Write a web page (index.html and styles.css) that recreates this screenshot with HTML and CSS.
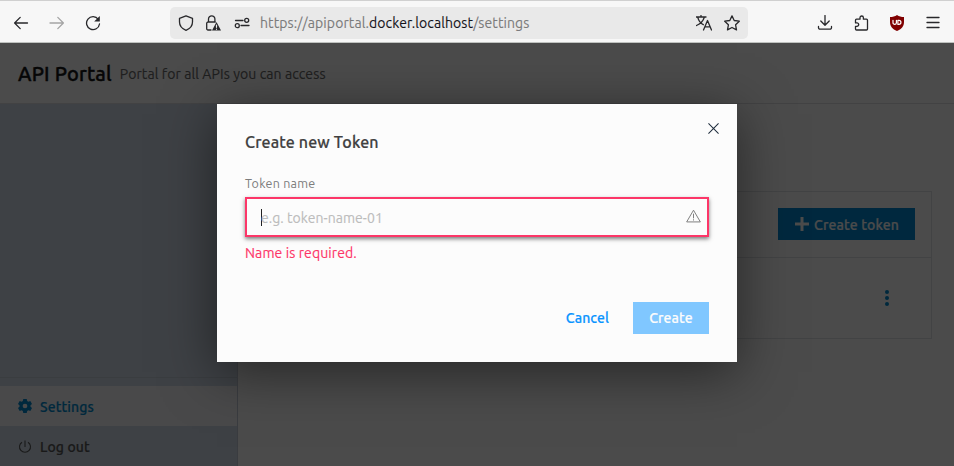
FILE: index.html
```
<!DOCTYPE html>
<html lang="en">
<head>
<meta charset="utf-8">
<title>API Portal</title>
<link rel="stylesheet" href="styles.css">
</head>
<body>
<div class="browser">
  <svg class="icon back" viewBox="0 0 16 16"><path d="M14.500 8H1.600M7.200 2.400 1.600 8l5.600 5.600"/></svg>
  <svg class="icon forward" viewBox="0 0 16 16"><path d="M1 8h13.400M8.800 2.400 14.400 8l-5.600 5.600"/></svg>
  <svg class="icon reload" viewBox="0 0 16 16"><path d="M13.300 4.300A6.500 6.500 0 1 0 14.500 9"/><path class="solid" d="M14.800 1v5.600H9.200z"/></svg>
  <div class="address">
    <svg class="icon shield" viewBox="0 0 16 16"><path d="M8 .8 14.500 3.300V7c0 3.600-2.300 6.600-6.500 8.300C3.800 13.600 1.500 10.600 1.500 7V3.300z"/></svg>
    <svg class="icon lock" viewBox="0 0 16 16"><path d="M6 15H3a1.300 1.300 0 0 1-1.300-1.300V8.300A1.300 1.300 0 0 1 3 7h7.300M3.500 7V4a3.200 3.200 0 0 1 6.400 0v3"/><path class="solid" d="M11.500 7 16 15.500H7z"/><path class="mark" d="M11.500 10v2.300M11.500 14v.3"/></svg>
    <svg class="icon sliders" viewBox="0 0 16 16"><path d="M1.500 5.500h7.500M7 10.500h8"/><circle cx="12.700" cy="5.300" r="2"/><circle cx="3.300" cy="10.700" r="2"/></svg>
    <span class="url">https://apiportal.<b>docker.localhost</b>/settings</span>
    <svg class="icon translate" viewBox="0 0 16 16"><path d="M0 2h10M5 .5V2M1.800 2.500c1 3.500 3 6 5.500 7.200M8.200 2.500C7.200 6 4.500 8.800.5 10.500M7.500 15l4-9.500 4 9.500M9 11.800h5"/></svg>
    <svg class="icon star" viewBox="0 0 16 16"><path d="m8 .9 2.200 4.600 5.100.7-3.700 3.600.9 5.100L8 12.500l-4.500 2.400.9-5.100L.7 6.200l5.100-.7z"/></svg>
  </div>
  <svg class="icon download" viewBox="0 0 16 16"><path d="M8 .5v9.500M3.800 6 8 10.200 12.200 6M1.500 11.500v1.200a1.500 1.500 0 0 0 1.500 1.500h10a1.500 1.500 0 0 0 1.500-1.500v-1.200"/></svg>
  <svg class="icon puzzle" viewBox="0 0 16 16"><path d="M2.500 6.500V5.200a1 1 0 0 1 1-1H7V2.700a1.700 1.700 0 0 1 3.400 0v1.500h3.100a1 1 0 0 1 1 1V14a1 1 0 0 1-1 1h-10a1 1 0 0 1-1-1v-2.700H4a1.700 1.700 0 0 0 0-3.400H2.500z"/></svg>
  <svg class="icon ublock" viewBox="0 0 16 16"><path class="badge" d="M8 0c2 1.500 4.400 2 7 2v5c0 4.500-2.500 7-7 9-4.500-2-7-4.500-7-9V2c2.600 0 5-.5 7-2z"/><path class="letters" d="M4 5.300v2.400a1.700 1.700 0 0 0 3.400 0V5.300M8.900 5.300v4.100h1a2 2 0 0 0 0-4.100z"/></svg>
  <svg class="icon menu" viewBox="0 0 16 16"><path d="M2 2.500h12M2 7.500h12M2 12.500h12"/></svg>
</div>
<div class="page">
  <header class="top"><h1>API Portal</h1><p>Portal for all APIs you can access</p></header>
  <div class="body">
    <nav class="side">
      <div class="links">
        <a class="link active"><svg class="gear" viewBox="0 0 16 16"><path fill-rule="evenodd" d="M6 0h4l.5 2.300 1.300.8 2.300-.8 1.900 3.400L14.300 7.200v1.600l1.700 1.500-1.900 3.400-2.300-.8-1.300.8L10 16H6l-.5-2.300-1.300-.8-2.300.8L0 10.300l1.700-1.500V7.200L0 5.700l1.900-3.400 2.300.8 1.300-.8zM8 5.300a2.700 2.700 0 1 0 0 5.400 2.700 2.700 0 0 0 0-5.400z"/></svg><span>Settings</span></a>
        <a class="link"><svg class="power" viewBox="0 0 14 14"><path d="M7 .5V7M4 2.200a5.500 5.500 0 1 0 6 0"/></svg><span>Log out</span></a>
      </div>
    </nav>
    <main class="content">
      <section class="card">
        <div class="bar"><button class="add"><svg viewBox="0 0 14 14"><path d="M7 0v14M0 7h14"/></svg><span>Create token</span></button></div>
        <div class="row"><svg class="dots" viewBox="0 0 4 16"><circle cx="2" cy="2" r="2"/><circle cx="2" cy="8" r="2"/><circle cx="2" cy="14" r="2"/></svg></div>
      </section>
    </main>
  </div>
  <div class="overlay">
    <div class="modal">
      <svg class="close" viewBox="0 0 12 12"><path d="m.5.5 11 11M11.500.5l-11 11"/></svg>
      <h2>Create new Token</h2>
      <div class="label">Token name</div>
      <div class="field"><i class="caret"></i><span class="hint">e.g. token-name-01</span><svg class="warn" viewBox="0 0 16 14"><path d="M8 .8 15.300 13.300H.7zM8 4.500v5M8 10.500v1.300"/></svg></div>
      <div class="error">Name is required.</div>
      <div class="actions"><span class="cancel">Cancel</span><span class="create">Create</span></div>
    </div>
  </div>
</div>
</body>
</html>
```
FILE: styles.css
```
* { box-sizing: border-box; }
body { margin: 0; height: 466px; overflow: hidden; font-family: Ubuntu, "Noto Sans", sans-serif; font-size: 14px; color: #3c3c3c; white-space: nowrap; }
h1, h2, p { margin: 0; }
svg { display: block; flex: none; }

.browser { height: 43px; display: flex; align-items: center; padding: 2px 13px 0; background: #f7f7f7; border-top: 1px solid #d0d0d0; border-bottom: 1px solid #bfc2bf; }
.icon { width: 16px; height: 16px; fill: none; stroke: #28282b; stroke-width: 1.3; stroke-linejoin: round; stroke-linecap: round; }
.icon .solid { fill: #28282b; stroke: none; }
.icon .mark { stroke: #e9e9e9; stroke-width: 1.2; }
.forward { margin-left: 20px; stroke: #a5a5a5; }
.reload { margin-left: 20px; }
.address { width: 578px; height: 32px; margin-left: 69px; padding: 0 8px; display: flex; align-items: center; border-radius: 5px; background: #e9e9e9; }
.lock { margin-left: 11px; }
.sliders { margin-left: 13px; }
.url { flex: 1; margin-left: 10px; color: #7b7b7b; letter-spacing: .1px; -webkit-text-stroke: .1px; }
.url b { font-weight: 400; color: #15141a; }
.star { margin-left: 12px; }
.download { margin-left: 69px; }
.puzzle { margin-left: 20px; }
.ublock { margin-left: 20px; }
.ublock .badge { fill: #800000; stroke: none; }
.ublock .letters { stroke: #fff; stroke-width: 1.2; }
.menu { margin-left: 20px; }

.page { position: relative; height: 423px; background: #fcfcfc; display: flex; flex-direction: column; }
.top { height: 61px; flex: none; display: flex; align-items: center; padding-left: 18px; border-bottom: 1px solid #dcdce0; }
.top h1 { font-size: 20px; font-weight: 500; color: #151515; letter-spacing: .2px; -webkit-text-stroke: .4px; }
.top p { margin: 2px 0 0 8px; color: #686868; letter-spacing: .1px; -webkit-text-stroke: .15px; }
.body { flex: 1; display: flex; }
.side { width: 238px; display: flex; flex-direction: column; justify-content: flex-end; background: #cfdbe7; border-right: 1px solid #c4cad6; }
.links { height: 89px; padding-top: 8px; border-top: 1px solid #c1ccd8; }
.link { height: 40px; display: flex; align-items: center; padding-left: 18px; font-weight: 500; color: #555; -webkit-text-stroke: .2px; letter-spacing: .1px; }
.link span { margin: 2px 0 0 8px; }
.link.active { background: #f3f5f7; color: #0088cc; }
.gear { width: 14px; height: 14px; fill: #0088cc; }
.power { width: 14px; height: 14px; margin-top: 1px; fill: none; stroke: #555; stroke-width: 1.1; }
.content { flex: 1; padding: 87px 22px 0 24px; }
.card { height: 148px; border: 1px solid #dedfe3; }
.bar { height: 66px; display: flex; align-items: center; justify-content: flex-end; padding: 0 16px 1px 0; border-bottom: 1px solid #dedfe3; }
.add { width: 137px; height: 32px; padding: 0 0 0 17px; display: flex; align-items: center; border: 0; background: #0088cf; color: #fcfcfc; font: inherit; font-weight: 500; -webkit-text-stroke: .2px; letter-spacing: .15px; }
.add svg { width: 14px; height: 14px; stroke: #fcfcfc; stroke-width: 3; }
.add span { margin: 1px 0 0 5px; }
.row { height: 80px; display: flex; align-items: center; justify-content: flex-end; padding-right: 42px; }
.dots { width: 4px; height: 16px; fill: #0088cc; }

.overlay { position: absolute; inset: 0; padding: 61px 0 0 217px; background: rgba(0, 0, 0, .7); overflow: hidden; }
.modal { position: relative; width: 520px; height: 258px; padding: 26px 28px 0; background: #fcfcfc; box-shadow: 0 10px 50px rgba(0, 0, 0, .5); }
.close { position: absolute; top: 19px; right: 18px; width: 11px; height: 11px; stroke: #1e2c3c; stroke-width: 1.1; }
.modal h2 { height: 24px; line-height: 24px; font-size: 16px; font-weight: 500; letter-spacing: .15px; color: #404040; -webkit-text-stroke: .2px; }
.label { margin-top: 21px; height: 18px; line-height: 17px; font-size: 12.5px; letter-spacing: .25px; color: #7d7d7d; }
.field { height: 40px; margin-top: 4px; padding: 0 6px 0 14px; display: flex; align-items: center; border: 2px solid #fc3668; box-shadow: 0 2px 4px rgba(0, 0, 0, .5); }
.caret { width: 1px; height: 17px; background: #222; }
.hint { flex: 1; margin: 2px 0 0 -1px; letter-spacing: .05px; color: #bcbcbc; -webkit-text-stroke: .15px; }
.warn { width: 15px; height: 14px; margin-top: -2px; fill: none; stroke: #777; stroke-width: 1; }
.error { height: 20px; line-height: 20px; margin-top: 6px; letter-spacing: .1px; color: #fc3668; -webkit-text-stroke: .15px; }
.actions { display: flex; justify-content: flex-end; align-items: center; height: 32px; margin-top: 39px; font-weight: 500; -webkit-text-stroke: .2px; letter-spacing: .1px; }
.cancel { color: #0a94ff; }
.create { width: 76px; height: 32px; line-height: 32px; margin-left: 24px; text-align: center; background: #80c7ff; color: #fcfcfc; }
```
